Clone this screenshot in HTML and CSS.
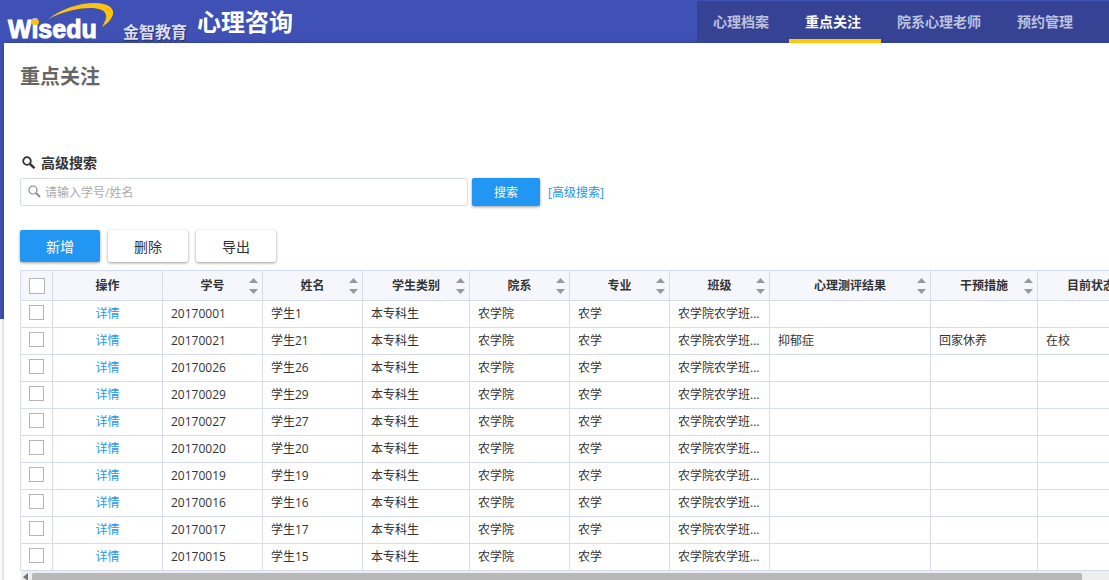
FILE: index.html
```html
<!DOCTYPE html>
<html lang="zh-CN">
<head>
  <meta charset="UTF-8">
  <meta name="viewport" content="width=device-width, initial-scale=1.0">
  <title>心理咨询</title>
  <link rel="stylesheet" href="styles.css">
</head>
<body>
  <header class="header">
    <div class="brand">
      <svg class="logo" width="116" height="43" viewBox="0 0 116 43" role="img" aria-label="Wisedu">
        <text class="logo-text" x="8" y="38">Wisedu</text>
        <ellipse cx="35" cy="22" rx="4" ry="3" fill="#ffc20e"/>
        <path d="M48 19 C62 9 78 3 95 3 C108 3 114 8 113 14 C112 19 108 23 102 27 C105 21 107 18 106 15 C105 10 99 8 90 8 C76 8 63 12 48 19 Z" fill="#ffc20e"/>
      </svg>
      <span class="company">金智教育</span>
      <span class="app-name">心理咨询</span>
    </div>
    <nav class="nav">
      <a href="#">心理档案</a>
      <a href="#" class="active">重点关注</a>
      <a href="#">院系心理老师</a>
      <a href="#">预约管理</a>
    </nav>
  </header>
  <main class="page">
    <h1>重点关注</h1>
    <form class="search">
      <label class="search-title" for="keyword">
        <svg width="14" height="14" viewBox="0 0 14 14"><circle cx="5" cy="5" r="3.8" fill="none" stroke="#333" stroke-width="1.8"/><path d="M8 8 L12.5 12.2" stroke="#333" stroke-width="2.4"/></svg>
        高级搜索
      </label>
      <div class="search-row">
        <div class="search-box">
          <svg width="14" height="14" viewBox="0 0 14 14"><circle cx="6" cy="5" r="4" fill="none" stroke="#888" stroke-width="1.2"/><path d="M9 8 L13 12" stroke="#888" stroke-width="1.8"/></svg>
          <input id="keyword" type="text" placeholder="请输入学号/姓名">
        </div>
        <button type="button" class="btn primary small">搜索</button>
        <a href="#" class="advanced">[高级搜索]</a>
      </div>
    </form>
    <div class="toolbar">
      <button type="button" class="btn primary">新增</button>
      <button type="button" class="btn">删除</button>
      <button type="button" class="btn">导出</button>
    </div>
    <div class="grid">
      <table>
        <colgroup>
          <col class="w-check"><col class="w-action"><col class="w-s"><col class="w-s"><col class="w-m"><col class="w-s">
          <col class="w-s"><col class="w-s"><col class="w-l"><col class="w-m"><col class="w-m">
        </colgroup>
        <thead>
          <tr>
            <th><input type="checkbox" aria-label="全选"></th>
            <th>操作</th>
            <th class="sort">学号</th>
            <th class="sort">姓名</th>
            <th class="sort">学生类别</th>
            <th class="sort">院系</th>
            <th class="sort">专业</th>
            <th class="sort">班级</th>
            <th class="sort">心理测评结果</th>
            <th class="sort">干预措施</th>
            <th class="sort">目前状态</th>
          </tr>
        </thead>
        <tbody>
          <tr><td><input type="checkbox" aria-label="学生1"></td><td><a href="#">详情</a></td><td>20170001</td><td>学生1</td><td>本专科生</td><td>农学院</td><td>农学</td><td>农学院农学班...</td><td></td><td></td><td></td></tr>
          <tr><td><input type="checkbox" aria-label="学生21"></td><td><a href="#">详情</a></td><td>20170021</td><td>学生21</td><td>本专科生</td><td>农学院</td><td>农学</td><td>农学院农学班...</td><td>抑郁症</td><td>回家休养</td><td>在校</td></tr>
          <tr><td><input type="checkbox" aria-label="学生26"></td><td><a href="#">详情</a></td><td>20170026</td><td>学生26</td><td>本专科生</td><td>农学院</td><td>农学</td><td>农学院农学班...</td><td></td><td></td><td></td></tr>
          <tr><td><input type="checkbox" aria-label="学生29"></td><td><a href="#">详情</a></td><td>20170029</td><td>学生29</td><td>本专科生</td><td>农学院</td><td>农学</td><td>农学院农学班...</td><td></td><td></td><td></td></tr>
          <tr><td><input type="checkbox" aria-label="学生27"></td><td><a href="#">详情</a></td><td>20170027</td><td>学生27</td><td>本专科生</td><td>农学院</td><td>农学</td><td>农学院农学班...</td><td></td><td></td><td></td></tr>
          <tr><td><input type="checkbox" aria-label="学生20"></td><td><a href="#">详情</a></td><td>20170020</td><td>学生20</td><td>本专科生</td><td>农学院</td><td>农学</td><td>农学院农学班...</td><td></td><td></td><td></td></tr>
          <tr><td><input type="checkbox" aria-label="学生19"></td><td><a href="#">详情</a></td><td>20170019</td><td>学生19</td><td>本专科生</td><td>农学院</td><td>农学</td><td>农学院农学班...</td><td></td><td></td><td></td></tr>
          <tr><td><input type="checkbox" aria-label="学生16"></td><td><a href="#">详情</a></td><td>20170016</td><td>学生16</td><td>本专科生</td><td>农学院</td><td>农学</td><td>农学院农学班...</td><td></td><td></td><td></td></tr>
          <tr><td><input type="checkbox" aria-label="学生17"></td><td><a href="#">详情</a></td><td>20170017</td><td>学生17</td><td>本专科生</td><td>农学院</td><td>农学</td><td>农学院农学班...</td><td></td><td></td><td></td></tr>
          <tr><td><input type="checkbox" aria-label="学生15"></td><td><a href="#">详情</a></td><td>20170015</td><td>学生15</td><td>本专科生</td><td>农学院</td><td>农学</td><td>农学院农学班...</td><td></td><td></td><td></td></tr>
        </tbody>
      </table>
      <div class="scrollbar">
        <span class="arrow"></span>
        <span class="thumb"></span>
      </div>
    </div>
  </main>
</body>
</html>
```
FILE: styles.css
```css
* {
  box-sizing: border-box;
}

body {
  margin: 0;
  height: 100vh;
  overflow: hidden;
  font-family: "Open Sans", "Noto Sans CJK SC", sans-serif;
  font-size: 12px;
  color: #333;
  background: linear-gradient(#3f51b5 319px, #fff 319px);
}

a {
  color: #2196f3;
  text-decoration: none;
}

/* header */
.header {
  display: flex;
  justify-content: space-between;
  height: 43px;
  background-color: #3f51b5;
}

.brand {
  display: flex;
  color: #fff;
  white-space: nowrap;
}

.logo-text {
  font-family: "Liberation Sans", Arial, sans-serif;
  font-size: 25px;
  font-weight: bold;
  fill: #fff;
  stroke: #fff;
  stroke-width: 1;
}

.company {
  padding: 20px 0 0 7px;
  font-size: 16px;
  font-weight: bold;
  line-height: 24px;
  color: #d8dcf0;
  text-shadow: 1px 1px 1px rgba(0, 0, 0, 0.4);
}

.app-name {
  padding-left: 10px;
  font-size: 24px;
  font-weight: bold;
  line-height: 44px;
}

.nav {
  display: flex;
  margin-top: 1px;
  padding-right: 16px;
  background-color: #364395;
}

.nav a {
  padding: 0 20px 0 16px;
  font-size: 14px;
  font-weight: bold;
  line-height: 42px;
  color: #bcc1de;
  white-space: nowrap;
}

.nav .active {
  color: #fff;
  border-bottom: 4px solid #ffc800;
}

/* page */
.page {
  min-height: calc(100vh - 43px);
  margin-left: 4px;
  padding: 20px 0 0 16px;
  background-color: #fff;
  box-shadow: 0 0 4px rgba(0, 0, 0, 0.3);
}

h1 {
  margin: 0 0 64px;
  font-size: 20px;
  line-height: 28px;
  color: #666;
}

.search-title {
  display: flex;
  align-items: center;
  gap: 5px;
  padding-left: 2px;
  font-size: 14px;
  font-weight: bold;
  line-height: 16px;
}

.search-row {
  display: flex;
  align-items: center;
  margin-top: 7px;
}

.search-box {
  display: flex;
  align-items: center;
  gap: 4px;
  width: 448px;
  height: 28px;
  padding: 0 6px;
  border: 1px solid #d6dbf0;
  border-radius: 2px;
}

.search-box input {
  flex: 1;
  min-width: 0;
  padding: 0;
  border: 0;
  outline: 0;
  font: inherit;
}

.search-box input::placeholder {
  color: #aaa;
}

.advanced {
  margin-left: 8px;
}

.btn {
  width: 80px;
  height: 32px;
  padding: 0;
  border: 0;
  border-radius: 2px;
  font-family: inherit;
  font-size: 14px;
  color: #333;
  background-color: #fff;
  box-shadow: 0 1px 3px rgba(0, 0, 0, 0.4);
}

.btn.primary {
  color: #fff;
  background-color: #2196f3;
}

.btn.small {
  width: 68px;
  height: 28px;
  margin-left: 4px;
  font-size: 12px;
}

.toolbar {
  display: flex;
  gap: 8px;
  margin: 24px 0 8px;
}

/* table */
.grid {
  overflow: hidden;
}

table {
  table-layout: fixed;
  width: 1125px;
  border-collapse: separate;
  border-spacing: 0;
  border-top: 1px solid #d6dbf0;
  border-left: 1px solid #d6dbf0;
}

.w-check { width: 32px; }
.w-action { width: 110px; }
.w-s { width: 100px; }
.w-m { width: 107px; }
.w-l { width: 161px; }

th, td {
  height: 27px;
  padding: 0 8px;
  border-right: 1px solid #d6dbf0;
  border-bottom: 1px solid #d6dbf0;
  line-height: 18px;
  text-align: left;
  white-space: nowrap;
}

th {
  height: 30px;
  text-align: center;
  background-color: #f6f7fc;
}

td:nth-child(2) {
  text-align: center;
}

/* up and down triangles at the right of the heading */
.sort {
  position: relative;
}

.sort::before,
.sort::after {
  content: "";
  position: absolute;
  right: 4px;
  width: 9px;
  height: 5px;
  background-color: #999;
}

.sort::before {
  top: 7px;
  clip-path: polygon(50% 0, 100% 100%, 0 100%);
}

.sort::after {
  bottom: 6px;
  clip-path: polygon(0 0, 100% 0, 50% 100%);
}

th:first-child, td:first-child {
  padding: 0 0 0 8px;
  text-align: left;
}

td:first-child {
  padding-bottom: 3px;
}

input[type="checkbox"] {
  display: block;
  appearance: none;
  width: 15px;
  height: 15px;
  margin: 0;
  border: 1px solid #b5b5b5;
  background-color: #fff;
}

th input[type="checkbox"] {
  width: 16px;
  height: 16px;
}

.scrollbar {
  display: flex;
  align-items: flex-start;
  height: 16px;
  margin-left: 1px;
  padding: 2px 27px 0 2px;
  background-color: #eee;
}

.arrow {
  flex: none;
  width: 5px;
  height: 8px;
  margin-right: 4px;
  background-color: #777;
  clip-path: polygon(0 50%, 100% 0, 100% 100%);
}

.thumb {
  flex: 1;
  height: 14px;
  border-radius: 2px;
  background-color: #b8b8b8;
}
```
